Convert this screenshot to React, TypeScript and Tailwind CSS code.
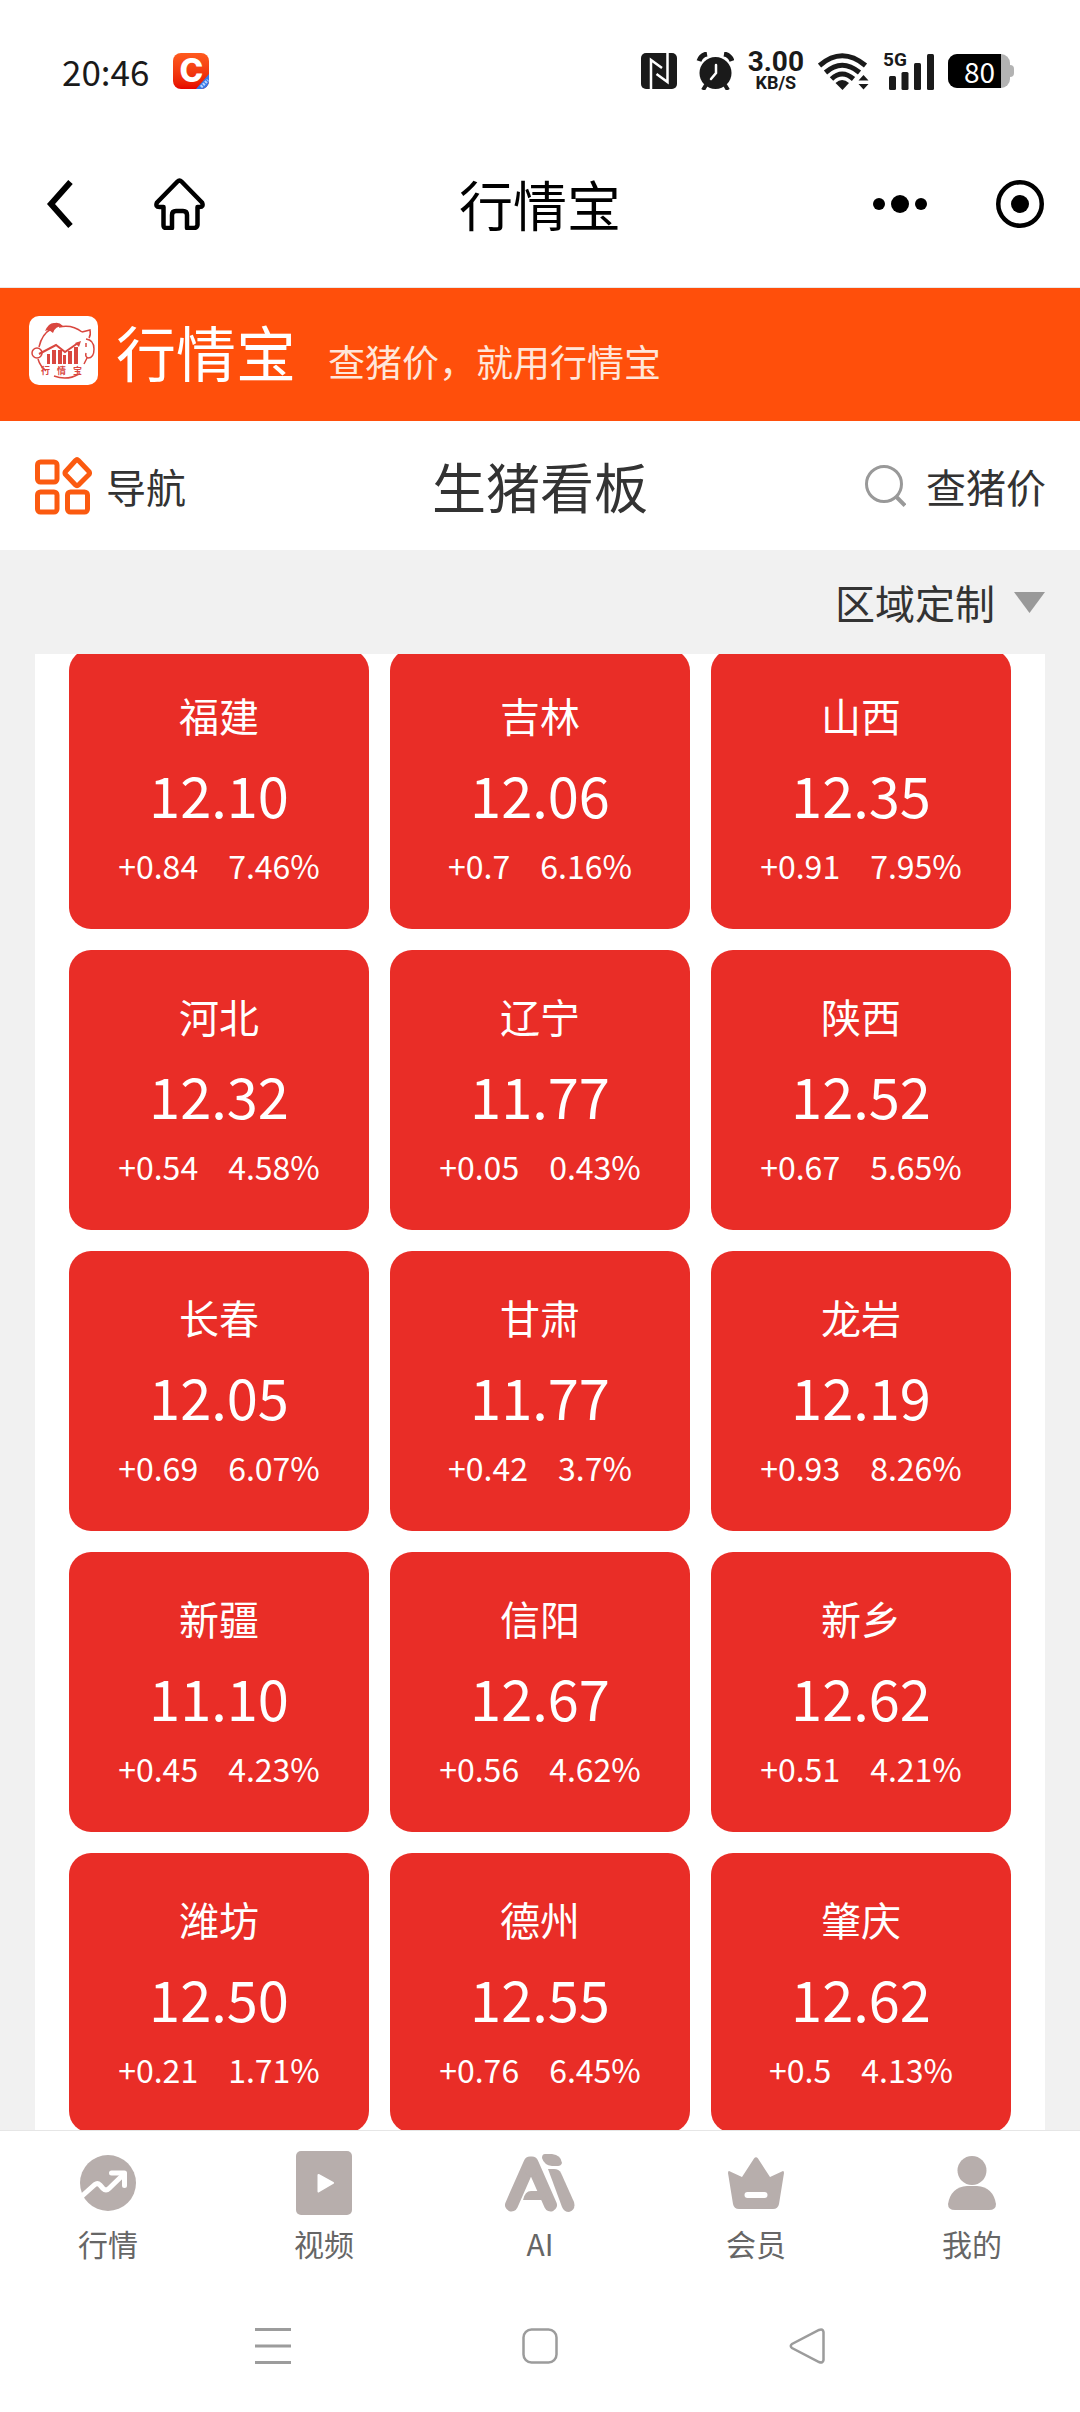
import React, { ReactNode } from 'react';

interface Quote {
  region: string;
  price: string;
  change: string;
  percent: string;
}

interface Tab {
  label: string;
  icon: ReactNode;
}

const quotes: Quote[] = [
  { region: '福建', price: '12.10', change: '+0.84', percent: '7.46%' },
  { region: '吉林', price: '12.06', change: '+0.7', percent: '6.16%' },
  { region: '山西', price: '12.35', change: '+0.91', percent: '7.95%' },
  { region: '河北', price: '12.32', change: '+0.54', percent: '4.58%' },
  { region: '辽宁', price: '11.77', change: '+0.05', percent: '0.43%' },
  { region: '陕西', price: '12.52', change: '+0.67', percent: '5.65%' },
  { region: '长春', price: '12.05', change: '+0.69', percent: '6.07%' },
  { region: '甘肃', price: '11.77', change: '+0.42', percent: '3.7%' },
  { region: '龙岩', price: '12.19', change: '+0.93', percent: '8.26%' },
  { region: '新疆', price: '11.10', change: '+0.45', percent: '4.23%' },
  { region: '信阳', price: '12.67', change: '+0.56', percent: '4.62%' },
  { region: '新乡', price: '12.62', change: '+0.51', percent: '4.21%' },
  { region: '潍坊', price: '12.50', change: '+0.21', percent: '1.71%' },
  { region: '德州', price: '12.55', change: '+0.76', percent: '6.45%' },
  { region: '肇庆', price: '12.62', change: '+0.5', percent: '4.13%' },
];

const tabs: Tab[] = [
  {
    label: '行情',
    icon: (
      <svg width="56" height="56" viewBox="0 0 56 56" aria-hidden="true">
        <circle cx="28" cy="28" r="28" fill="#b7aeac" />
        <path d="M1 42 L15 29.500 Q17.500 27.500 20 30 L23 33.500 Q26 36.500 29 33.500 L45 18" fill="none" stroke="#fff" strokeWidth="5" />
        <path d="M31.500 18 H44.500 V30.500" fill="none" stroke="#fff" strokeWidth="5" strokeLinecap="round" strokeLinejoin="round" />
      </svg>
    ),
  },
  {
    label: '视频',
    icon: (
      <svg width="56" height="64" viewBox="0 0 56 64" aria-hidden="true">
        <rect width="56" height="64" rx="5" fill="#b7aeac" />
        <path d="M22.500 24 L37 32 L22.500 40.500 Z" fill="#fff" stroke="#fff" strokeWidth="2" strokeLinejoin="round" />
      </svg>
    ),
  },
  {
    label: 'AI',
    icon: (
      <svg width="70" height="60" viewBox="0 0 70 60" aria-hidden="true">
        <g fill="none" stroke="#b7aeac" strokeWidth="13" strokeLinecap="round" strokeLinejoin="round">
          <path d="M6.500 52 L25 10 L27 10 L45.500 52" />
        </g>
        <path d="M22 12 H30 L32 20 L26 24 L20 20 Z" fill="#b7aeac" />
        <path d="M18 47 Q20 38 26 38 H38 L44 52 Q41 47 36 47 Z" fill="#b7aeac" />
        <path d="M43 16 H49 Q54 16 56 20 L69 49 Q71 57 64 59 Q59 59 57 54 Z" fill="#b7aeac" />
        <path d="M40 1 H47 Q56 2 57 10 Q56 13 53 13 H47 Q39 12 37 5 Q37 1 40 1 Z" fill="#b7aeac" />
      </svg>
    ),
  },
  {
    label: '会员',
    icon: (
      <svg width="56" height="54" viewBox="0 0 56 54" aria-hidden="true">
        <path d="M1 15 L14 21 L26 2.500 Q28 0 30 2.500 L42 21 L55 15 Q56 15 56 17 L51 48 Q50 53 45 53 H11 Q6 53 5 48 L0 17 Q0 15 1 15 Z" fill="#b7aeac" />
        <rect x="16.500" y="36" width="23" height="6" rx="3" fill="#fff" />
      </svg>
    ),
  },
  {
    label: '我的',
    icon: (
      <svg width="48" height="54" viewBox="0 0 48 54" aria-hidden="true">
        <circle cx="24" cy="14.500" r="14.500" fill="#b7aeac" />
        <path d="M19 30 H29 Q45 31 48 48 Q48 54 41 54 H7 Q0 54 0 48 Q3 31 19 30 Z" fill="#b7aeac" />
      </svg>
    ),
  },
];

function StatusBar() {
  return (
    <div className="flex h-[120px] shrink-0 items-center justify-between pt-[22px] pr-[66px] pl-[62px] text-[#1a1a1a]">
      <div className="flex items-center gap-6">
        <span className="text-[35px] leading-10">20:46</span>
        <span className="relative flex size-9 items-center justify-center rounded-lg bg-linear-to-b from-[#ff5a1e] to-[#e60000] font-[Inter] text-[32px] leading-10 font-extrabold text-white">
          C
          <svg className="absolute right-0 bottom-0 rounded-br-lg" width="13" height="15" viewBox="0 0 13 15" aria-hidden="true">
            <path d="M13 0 V15 H0 Z" fill="#3478e8" />
            <path d="M5 13 L12 6" stroke="#b9d3ff" strokeWidth="3" strokeDasharray="2 1" />
          </svg>
        </span>
      </div>
      <div className="flex items-center gap-[14px]">
        <svg width="36" height="36" viewBox="0 0 36 36" aria-hidden="true">
          <rect width="36" height="36" rx="5" fill="#1a1a1a" />
          <path d="M10 36 V7 L21 15 M26.500 0 V29 L15.500 21" fill="none" stroke="#fff" strokeWidth="2.500" />
        </svg>
        <svg width="43" height="38" viewBox="-6 0 43 38" aria-hidden="true">
          <circle cx="18.500" cy="21" r="16" fill="#1a1a1a" />
          <path d="M2 9 Q4 3 10 2 M27 2 Q33 3 35 9" fill="none" stroke="#1a1a1a" strokeWidth="5" />
          <path d="M9 33 L6 38 M28 33 L31 38" stroke="#1a1a1a" strokeWidth="4" />
          <path d="M19 13 V21 L14 27" fill="none" stroke="#fff" strokeWidth="2.500" strokeLinecap="round" />
        </svg>
        <div className="flex flex-col items-center font-[Roboto] font-bold">
          <span className="text-[28px] leading-6">3.00</span>
          <span className="text-[18px] leading-[18px]">KB/S</span>
        </div>
        <svg width="51" height="37" viewBox="0 0 51 37" aria-hidden="true">
          <g fill="none" stroke="#1a1a1a" strokeWidth="5">
            <path d="M1.500 12.500 Q24 -7 47.500 12.500" />
            <path d="M7.500 19.500 Q24 5 41.500 19.500" />
            <path d="M13.500 26 Q24 16 35.500 26" />
          </g>
          <path d="M17.500 30 Q24 24 31 30 L24.500 37 Z" fill="#1a1a1a" />
          <path d="M45.500 22 L50.500 27.500 H40.500 Z M40.500 31 H50.500 L45.500 36.500 Z" fill="#1a1a1a" />
        </svg>
        <div className="relative">
          <svg width="51" height="38" viewBox="0 0 51 38" aria-hidden="true">
            <g fill="#1a1a1a">
              <rect x="6" y="24" width="7" height="14" rx="1.500" />
              <rect x="18.500" y="20" width="7" height="18" rx="1.500" />
              <rect x="31" y="11" width="7" height="27" rx="1.500" />
              <rect x="44" y="2" width="7" height="36" rx="1.500" />
            </g>
          </svg>
          <span className="absolute -top-1 left-0 font-[Roboto] text-[19px] leading-6 font-bold">5G</span>
        </div>
        <div className="flex items-center">
          <div className="h-[34px] w-[62px] rounded-[9px] bg-[#b3b3b3]">
            <div className="flex h-full w-[53px] items-center rounded-l-[9px] bg-black pl-4 text-[28px] leading-10 text-white">80</div>
          </div>
          <span className="h-3 w-1 rounded-r bg-[#b3b3b3]" />
        </div>
      </div>
    </div>
  );
}

function TitleBar() {
  return (
    <header className="grid h-[168px] shrink-0 grid-cols-[1fr_auto_1fr] items-center border-b border-[#e9e9e9] px-9 text-black">
      <div className="flex items-center gap-20 pl-[10px]">
        <button aria-label="返回">
          <svg width="28" height="50" viewBox="0 0 28 50">
            <path d="M24.500 3 L5 25 L24.500 47" fill="none" stroke="#000" strokeWidth="6" />
          </svg>
        </button>
        <button aria-label="首页">
          <svg width="51" height="52" viewBox="0 0 51 52">
            <path
              d="M23.500 3.500 Q25.500 1.500 27.500 3.500 L48 24.500 Q50 29 45.500 29 H43.500 V47 Q43 50 40 50 H33 V37 Q33 33 29 33 H22 Q18 33 18 37 V50 H12 Q9.500 50 9.500 47 V29 H5.500 Q1 29 3 24.500 Z"
              fill="none"
              stroke="#000"
              strokeWidth="4.500"
              strokeLinejoin="round"
            />
          </svg>
        </button>
      </div>
      <h1 className="text-[54px] leading-[72px]">行情宝</h1>
      <div className="flex items-center justify-end gap-[69px]">
        <button aria-label="更多">
          <svg width="54" height="20" viewBox="0 0 54 20">
            <circle cx="6" cy="10" r="6" />
            <circle cx="27" cy="10" r="9" />
            <circle cx="48" cy="10" r="6" />
          </svg>
        </button>
        <button aria-label="关闭">
          <svg width="48" height="48" viewBox="0 0 48 48">
            <circle cx="24" cy="24" r="21.750" fill="none" stroke="#000" strokeWidth="4.500" />
            <circle cx="24" cy="24" r="9" />
          </svg>
        </button>
      </div>
    </header>
  );
}

function PigLogo() {
  return (
    <svg className="shrink-0 rounded-[10px] bg-white" width="69" height="69" viewBox="0 0 69 69" aria-hidden="true">
      <g fill="none" stroke="#d9473f" strokeWidth="1.500">
        <path d="M10 31 Q13 18 22 13 M30 11 Q43 8 53 16 M9 43 Q11 50 17 55 M25 60 Q38 65 50 58 M55 48 L58 42" />
        <path d="M57 23 Q65 24 65 33 Q65 42 59 42 Q56 41 57 37" />
        <circle cx="8" cy="37" r="5" />
        <path d="M53 16 L61 14 Q62 19 60 22 M57 27 V31" />
        <path d="M10 38 L27 29 L36 36 L49 27" strokeWidth="2" />
      </g>
      <path d="M16 15 Q20 6 26 7 Q30 6 34 10 Q26 10 24 17 Q20 13 16 15 Z" fill="#d9473f" />
      <path d="M46 27 L52 25 L50 31 Z" fill="#d9473f" />
      <g fill="#d9473f">
        <rect x="18" y="38" width="3" height="10" />
        <rect x="23" y="34" width="4" height="14" />
        <rect x="29" y="34" width="4" height="14" />
        <rect x="34" y="39" width="3" height="9" />
        <rect x="39" y="35" width="4" height="13" />
        <rect x="45" y="31" width="4" height="17" />
      </g>
      <g fontSize="9" fontWeight="700" fill="#d9473f">
        <text x="12" y="58">行</text>
        <text x="28" y="58">情</text>
        <text x="44" y="58">宝</text>
      </g>
    </svg>
  );
}

function Banner() {
  return (
    <div className="flex h-[133px] shrink-0 items-center gap-[18px] bg-[#ff4f0b] px-[29px] pb-2">
      <PigLogo />
      <div className="flex items-baseline gap-8 text-white">
        <span className="text-[60px] leading-[72px]">行情宝</span>
        <span className="text-[37px] leading-[48px] text-[#ffe6da]">查猪价，就用行情宝</span>
      </div>
    </div>
  );
}

function Toolbar() {
  return (
    <div className="grid h-[129px] shrink-0 grid-cols-[1fr_auto_1fr] items-center px-[34px] text-[#333]">
      <button className="flex items-center gap-[14px] justify-self-start text-[40px] leading-[48px]">
        <svg width="58" height="58" viewBox="0 0 58 58" fill="none" stroke="#fb5a10" strokeWidth="5" aria-hidden="true">
          <rect x="3.500" y="5" width="19.500" height="20" rx="3" />
          <rect x="3.500" y="35" width="19.500" height="20" rx="3" />
          <rect x="33.500" y="35" width="20" height="20" rx="3" />
          <path d="M41.500 3.500 Q43 2 44.500 3.500 L55 14.500 Q56 16 55 17.500 L44.500 28 Q43 29.500 41.500 28 L31.500 17.500 Q30.500 16 31.500 14.500 Z" />
        </svg>
        导航
      </button>
      <h2 className="text-[54px] leading-[72px]">生猪看板</h2>
      <button className="flex items-center gap-5 justify-self-end text-[40px] leading-[48px]">
        <svg width="41" height="42" viewBox="0 0 41 42" fill="none" stroke="#999" strokeWidth="3" aria-hidden="true">
          <circle cx="19" cy="19" r="17.500" />
          <path d="M31 31.500 L40 40.500" strokeWidth="4" />
        </svg>
        查猪价
      </button>
    </div>
  );
}

function QuoteCard({ region, price, change, percent }: Quote) {
  return (
    <li className="flex h-[280px] flex-col items-center rounded-[22px] bg-[#e92d27] pt-[42px] text-white">
      <span className="text-[40px] leading-[48px]">{region}</span>
      <span className="mt-5 text-[56px] leading-[70px]">{price}</span>
      <span className="mt-4 flex gap-[30px] text-[32px] leading-10">
        <span>{change}</span>
        <span>{percent}</span>
      </span>
    </li>
  );
}

function TabBar() {
  return (
    <nav className="grid shrink-0 grid-cols-5 border-t border-[#e6e6e6] bg-white pt-5 text-[#666]">
      {tabs.map((tab) => (
        <a key={tab.label} href="#" className="flex flex-col items-center">
          <span className="flex h-16 items-center">{tab.icon}</span>
          <span className="mt-2 text-[30px] leading-10">{tab.label}</span>
        </a>
      ))}
    </nav>
  );
}

function SystemNav() {
  return (
    <div className="grid h-[149px] shrink-0 grid-cols-3 items-center justify-items-center px-[140px] pt-4">
      <button aria-label="最近任务">
        <svg width="36" height="36" viewBox="0 0 36 36">
          <path d="M0 1.500 H36 M0 18 H36 M0 34.500 H36" stroke="#9c9c9c" strokeWidth="3" />
        </svg>
      </button>
      <button aria-label="主屏幕">
        <svg width="36" height="36" viewBox="0 0 36 36">
          <rect x="1.500" y="1.500" width="33" height="33" rx="8" fill="none" stroke="#9c9c9c" strokeWidth="2.500" />
        </svg>
      </button>
      <button aria-label="返回上一页">
        <svg width="36" height="36" viewBox="0 0 36 36">
          <path d="M30 2 Q34 0.500 34.500 4 V32 Q34 35.500 30 34 L3 20 Q0.500 18 3 16 Z" fill="none" stroke="#9c9c9c" strokeWidth="2.500" />
        </svg>
      </button>
    </div>
  );
}

export default function App() {
  return (
    <div className="flex h-screen flex-col bg-white font-['Noto_Sans_CJK_SC',sans-serif]">
      <StatusBar />
      <TitleBar />
      <Banner />
      <Toolbar />
      <main className="flex min-h-0 flex-1 flex-col bg-[#f1f1f1] px-[35px]">
        <div className="flex h-[104px] shrink-0 items-center justify-end">
          <button className="flex items-center gap-[19px] text-[40px] leading-[48px] text-[#333]" aria-haspopup="listbox">
            区域定制
            <svg width="31" height="21" viewBox="0 0 31 21" aria-hidden="true">
              <path d="M0 0 H31 L15.500 21 Z" fill="#999" />
            </svg>
          </button>
        </div>
        <div className="min-h-0 flex-1 overflow-y-auto bg-white px-[34px] [scrollbar-width:none]">
          <ul className="-mt-[5px] grid grid-cols-3 gap-[21px]">
            {quotes.map((quote) => (
              <QuoteCard key={quote.region} {...quote} />
            ))}
          </ul>
        </div>
      </main>
      <TabBar />
      <SystemNav />
    </div>
  );
}
